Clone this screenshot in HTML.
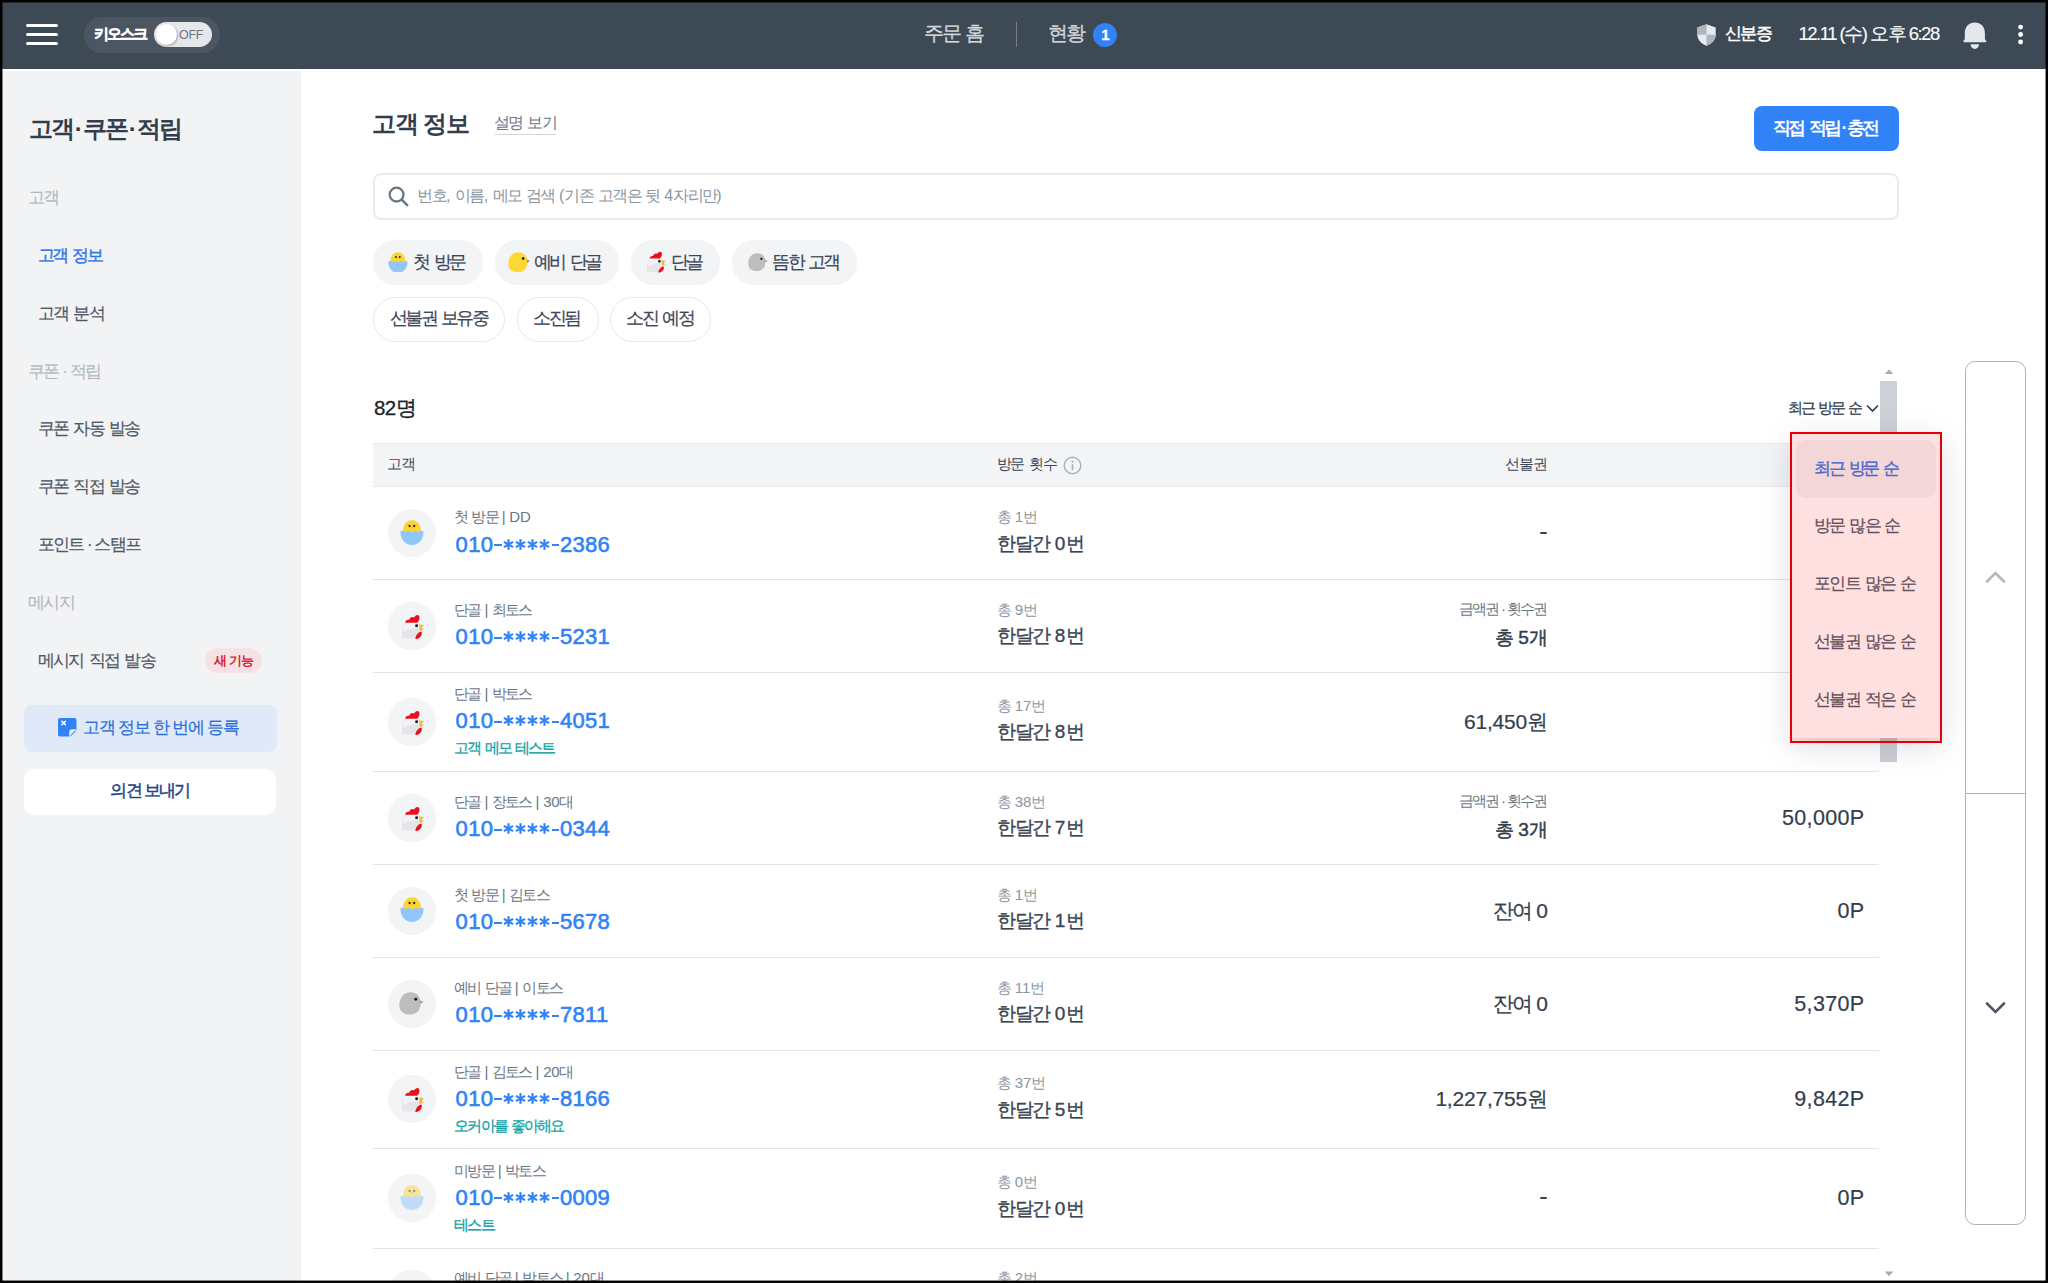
<!DOCTYPE html>
<html lang="ko">
<head>
<meta charset="utf-8">
<title>고객 정보</title>
<style>
*{box-sizing:border-box;margin:0;padding:0}
html,body{width:2048px;height:1283px;overflow:hidden;background:#fff}
body{position:relative;font-family:"Liberation Sans",sans-serif;color:#333d4b}
.a{position:absolute}
.t{position:absolute;white-space:nowrap;line-height:1}
.sb{-webkit-text-stroke:0.25px currentColor}
.sb2{-webkit-text-stroke:0.5px currentColor}
.ast{display:inline-block;position:relative}
</style>
</head>
<body>
<div class="a" style="left:0px;top:0px;width:2048px;height:69px;background:#3d4955;"></div>
<div class="a" style="left:26px;top:23.9px;width:32px;height:3.0px;background:#fff;border-radius:1.5px"></div>
<div class="a" style="left:26px;top:32.9px;width:32px;height:3.0px;background:#fff;border-radius:1.5px"></div>
<div class="a" style="left:26px;top:41.9px;width:32px;height:3.0px;background:#fff;border-radius:1.5px"></div>
<div class="a" style="left:84px;top:17px;width:136px;height:36px;background:#4b5662;border-radius:18px"></div>
<div class="t " style="left:94.4px;top:26.90px;font-size:14.5px;color:#fff;font-weight:700;letter-spacing:-2.1px;-webkit-text-stroke:0.4px #fff;">키오스크</div>
<div class="a" style="left:154px;top:22px;width:58px;height:25px;background:#e5e8eb;border-radius:12.5px"></div>
<div class="a" style="left:156px;top:24px;width:21px;height:21px;border-radius:50%;background:#fff;box-shadow:1px 1px 2px rgba(0,0,0,.28)"></div>
<div class="t " style="left:179px;top:28.50px;font-size:12.5px;color:#6b7684;letter-spacing:-0.3px;">OFF</div>
<div class="t " style="left:924.4px;top:23.32px;font-size:20px;color:#d1d6db;letter-spacing:-2.5px;-webkit-text-stroke:0.3px #d1d6db;">주문<span style="letter-spacing:0.3px"> </span>홈</div>
<div class="a" style="left:1015.5px;top:22px;width:1.2999999999999545px;height:25px;background:#76808c;"></div>
<div class="t " style="left:1048.4px;top:23.32px;font-size:20px;color:#d1d6db;letter-spacing:-2.8px;-webkit-text-stroke:0.3px #d1d6db;">현황</div>
<div class="a" style="left:1093px;top:22.5px;width:24px;height:24px;border-radius:50%;background:#3182f6"></div>
<div class="t " style="left:1093.30px;width:24px;text-align:center;top:27.28px;font-size:15px;color:#fff;font-weight:700;-webkit-text-stroke:0.3px #fff;">1</div>
<svg class="a" style="left:1697px;top:24px" width="19" height="22" viewBox="0 0 19 22">
 <path d="M9.5 0.3 L18.7 3.6 V10.5 C18.7 15.8 14.7 19.8 9.5 21.8 C4.3 19.8 0.3 15.8 0.3 10.5 V3.6 Z" fill="#e8ebee"/>
 <path d="M9.5 0.3 L0.3 3.6 V10.8 H9.5 Z" fill="#aeb5bd"/>
 <path d="M9.5 10.8 H18.7 C18.5 15.8 14.7 19.8 9.5 21.8 Z" fill="#aeb5bd"/>
</svg>
<div class="t " style="left:1724.8px;top:24.99px;font-size:17px;color:#fff;letter-spacing:-1.6px;-webkit-text-stroke:0.45px #fff;">신분증</div>
<div class="t " style="left:1798.5px;top:24.97px;font-size:18.5px;color:#f9fafb;letter-spacing:-1.5px;-webkit-text-stroke:0.15px #f9fafb;">12.11 (수) 오후 6:28</div>
<svg class="a" style="left:1962px;top:22px" width="25" height="28" viewBox="0 0 25 28">
 <path d="M12.85 0.4 C18.8 0.4 22.9 4.5 22.9 11 V17.3 L24 18.5 C24.6 19.2 24.3 20.3 23.3 20.3 H2.4 C1.4 20.3 1.1 19.2 1.7 18.5 L2.8 17.3 V11 C2.8 4.5 6.9 0.4 12.85 0.4 Z" fill="#e5e8eb"/>
 <path d="M8.6 22.3 H17 C17 25 15.2 27 12.8 27 C10.4 27 8.6 25 8.6 22.3 Z" fill="#e5e8eb"/>
</svg>
<svg class="a" style="left:2016px;top:22px" width="9" height="25" viewBox="0 0 9 25"><circle cx="4.6" cy="5.1" r="2.45" fill="#fff"/><circle cx="4.6" cy="12.5" r="2.45" fill="#fff"/><circle cx="4.6" cy="20" r="2.45" fill="#fff"/></svg>
<div class="a" style="left:0px;top:71px;width:301px;height:1212px;background:#f2f3f5;"></div>
<div class="t " style="left:28.6px;top:116.65px;font-size:24px;color:#333d4b;font-weight:700;letter-spacing:-1.9px;">고객<span style="padding:0 1.9px">·</span>쿠폰<span style="padding:0 1.9px">·</span>적립</div>
<div class="t " style="left:28.2px;top:188.79px;font-size:17px;color:#b0b8c1;letter-spacing:-1.7px;-webkit-text-stroke:0.1px #b0b8c1;">고객</div>
<div class="t " style="left:37.5px;top:246.79px;font-size:17px;color:#3276e4;letter-spacing:-2.2px;-webkit-text-stroke:0.4px #3276e4;">고객<span style="letter-spacing:0.5px"> </span>정보</div>
<div class="t " style="left:37.5px;top:304.79px;font-size:17px;color:#4e5968;letter-spacing:-1.7px;-webkit-text-stroke:0.2px #4e5968;">고객<span style="letter-spacing:0.5px"> </span>분석</div>
<div class="t " style="left:28.2px;top:362.59px;font-size:17px;color:#b0b8c1;letter-spacing:-1.7px;-webkit-text-stroke:0.1px #b0b8c1;">쿠폰<span style="padding:0 3.5px">·</span>적립</div>
<div class="t " style="left:37.5px;top:420.09px;font-size:17px;color:#4e5968;letter-spacing:-1.7px;-webkit-text-stroke:0.2px #4e5968;">쿠폰<span style="letter-spacing:0.5px"> </span>자동<span style="letter-spacing:0.5px"> </span>발송</div>
<div class="t " style="left:37.5px;top:477.79px;font-size:17px;color:#4e5968;letter-spacing:-1.7px;-webkit-text-stroke:0.2px #4e5968;">쿠폰<span style="letter-spacing:0.5px"> </span>직접<span style="letter-spacing:0.5px"> </span>발송</div>
<div class="t " style="left:37.5px;top:535.59px;font-size:17px;color:#4e5968;letter-spacing:-1.7px;-webkit-text-stroke:0.2px #4e5968;">포인트<span style="padding:0 3.5px">·</span>스탬프</div>
<div class="t " style="left:28.2px;top:594.19px;font-size:17px;color:#b0b8c1;letter-spacing:-1.7px;-webkit-text-stroke:0.1px #b0b8c1;">메시지</div>
<div class="t " style="left:37.5px;top:651.59px;font-size:17px;color:#4e5968;letter-spacing:-1.7px;-webkit-text-stroke:0.2px #4e5968;">메시지<span style="letter-spacing:0.5px"> </span>직접<span style="letter-spacing:0.5px"> </span>발송</div>
<div class="a" style="left:205.3px;top:648.3px;width:57.0px;height:25.200000000000045px;background:#f6e2e5;border-radius:13px"></div>
<div class="t " style="left:203.80px;width:60px;text-align:center;top:653.96px;font-size:13px;color:#d92434;font-weight:700;letter-spacing:-0.6px;">새 기능</div>
<div class="a" style="left:24px;top:705.2px;width:253px;height:47.09999999999991px;background:#e0e9f7;border-radius:8px"></div>
<svg class="a" style="left:58.3px;top:718.4px" width="18.5" height="18.5" viewBox="0 0 19 19">
 <path d="M2 0 H17 C18.1 0 19 .9 19 2 V11.5 L11.5 19 H2 C.9 19 0 18.1 0 17 V2 C0 .9 .9 0 2 0 Z" fill="#3182f6"/>
 <path d="M12.8 19 V14.8 C12.8 13.7 13.7 12.8 14.8 12.8 H19 Z" fill="#3182f6"/>
 <path d="M11.5 19 L19 11.5 H14.2 C12.7 11.5 11.5 12.7 11.5 14.2 Z" fill="#e0e9f7"/>
 <path d="M4 3.3 L7.6 6.9 M7.6 3.3 L4 6.9" stroke="#fff" stroke-width="1.5" stroke-linecap="round"/>
</svg>
<div class="t " style="left:83.4px;top:719.29px;font-size:17px;color:#2b6fdc;letter-spacing:-1.3px;-webkit-text-stroke:0.2px #2b6fdc;">고객 정보 한 번에 등록</div>
<div class="a" style="left:24px;top:769px;width:252px;height:46px;background:#fff;border-radius:10px"></div>
<div class="t " style="left:50.00px;width:200px;text-align:center;top:781.79px;font-size:17px;color:#1f4487;letter-spacing:-1.7px;-webkit-text-stroke:0.45px #1f4487;">의견 보내기</div>
<div class="t " style="left:372.4px;top:112.00px;font-size:24px;color:#333d4b;font-weight:700;letter-spacing:-1.3px;">고객 정보</div>
<div class="t " style="left:493.5px;top:114.64px;font-size:16px;color:#6b7684;letter-spacing:-1.3px;">설명<span style="letter-spacing:0px"> </span>보기</div>
<div class="a" style="left:494.5px;top:134px;width:61.5px;height:1.3000000000000114px;background:#d1d6db;"></div>
<div class="a" style="left:1753.7px;top:106px;width:145.0px;height:45px;background:#3182f6;border-radius:8px"></div>
<div class="t " style="left:1750.00px;width:150px;text-align:center;top:119.35px;font-size:18px;color:#fff;font-weight:700;letter-spacing:-2.8px;">직접<span style="letter-spacing:1.0px"> </span>적립<span style="padding:0 2.0px">·</span>충전</div>
<div class="a" style="left:373px;top:173px;width:1526px;height:47px;border-radius:8px;border:2px solid #ebebeb;background:#fff"></div>
<svg class="a" style="left:388px;top:186px" width="21" height="21" viewBox="0 0 21 21">
 <circle cx="8.6" cy="8.6" r="6.9" fill="none" stroke="#6b7684" stroke-width="2.3"/>
 <path d="M13.7 13.7 L19.2 19.2" stroke="#6b7684" stroke-width="2.5" stroke-linecap="round"/>
</svg>
<div class="t " style="left:417.2px;top:188.34px;font-size:16px;color:#8b95a1;letter-spacing:-1.6px;">번호<span style="letter-spacing:0.0px">, </span>이름<span style="letter-spacing:0.0px">, </span>메모<span style="letter-spacing:0.0px"> </span>검색<span style="letter-spacing:0.0px"> (</span>기존<span style="letter-spacing:0.0px"> </span>고객은<span style="letter-spacing:0.0px"> </span>뒷<span style="letter-spacing:0.0px"> 4</span>자리만<span style="letter-spacing:0.0px">)</span></div>
<div class="a" style="left:373px;top:240.3px;width:110px;height:44.30000000000001px;background:#f2f4f6;border-radius:22px"></div>
<div class="t " style="left:413.3px;top:252.55px;font-size:18px;color:#3d4756;letter-spacing:-2.6px;-webkit-text-stroke:0.2px #3d4756;">첫<span style="letter-spacing:0px"> </span>방문</div>
<div class="a" style="left:494.5px;top:240.3px;width:124.5px;height:44.30000000000001px;background:#f2f4f6;border-radius:22px"></div>
<div class="t " style="left:534.0999999999999px;top:252.55px;font-size:18px;color:#3d4756;letter-spacing:-2.6px;-webkit-text-stroke:0.2px #3d4756;">예비<span style="letter-spacing:0px"> </span>단골</div>
<div class="a" style="left:631px;top:240.3px;width:89px;height:44.30000000000001px;background:#f2f4f6;border-radius:22px"></div>
<div class="t " style="left:670.8px;top:252.55px;font-size:18px;color:#3d4756;letter-spacing:-2.6px;-webkit-text-stroke:0.2px #3d4756;">단골</div>
<div class="a" style="left:731.7px;top:240.3px;width:125.29999999999995px;height:44.30000000000001px;background:#f2f4f6;border-radius:22px"></div>
<div class="t " style="left:772.1999999999999px;top:252.55px;font-size:18px;color:#3d4756;letter-spacing:-2.6px;-webkit-text-stroke:0.2px #3d4756;">뜸한<span style="letter-spacing:0px"> </span>고객</div>
<svg class="a" style="left:387.7px;top:251.5px;opacity:1.0" width="19.92" height="20.75" viewBox="0 0 24 25">
 <path d="M3.2 12 C2.6 5 6.5 0.2 12 0.2 C17.5 0.2 21.4 5 20.8 12 Z" fill="#fcd535"/>
 <circle cx="9.6" cy="6" r="1.15" fill="#2a2a2a"/><circle cx="14.2" cy="6" r="1.15" fill="#2a2a2a"/>
 <path d="M11 7.4 L13 7.4 L12 8.7 Z" fill="#e8932a"/>
 <path d="M0.4 11.6 L3.2 10.4 L5.6 12.2 L8.6 10.4 L12 12.4 L15.4 10.4 L18.4 12.2 L20.8 10.4 L23.6 11.6 C23.6 19.6 18.6 25 12 25 C5.4 25 0.4 19.6 0.4 11.6 Z" fill="#92c5fa"/>
</svg>
<svg class="a" style="left:508.2px;top:251.8px" width="22.50" height="20.70" viewBox="0 0 25 23">
 <path d="M11.5 0.3 C17.5 0.3 21.3 4.2 21.6 10.3 C21.9 17.2 18.6 22.6 11 22.6 C4 22.6 0.3 18.6 0.3 13 C0.3 5.8 5 0.3 11.5 0.3 Z" fill="#fcd836"/>
 <circle cx="16.8" cy="7.3" r="1.45" fill="#111"/>
 <path d="M20.8 8.1 L24.6 10.1 L20.8 12.1 Z" fill="#e8872a"/>
</svg>
<svg class="a" style="left:646px;top:251px" width="20.64" height="21.50" viewBox="0 0 24 25">
 <path d="M1.6 24.6 C0.2 19 1.2 12.5 4.6 8.4 L15.2 8.4 C17.2 10.8 17.9 14.2 17.6 18 L16.8 24.6 Z" fill="#e4e5ea"/>
 <path d="M4.6 8.4 L15.2 8.4 C16.6 10.2 17.4 12.2 17.6 14.2 C13 13.4 7.8 14.8 2.8 18.2 C2.3 14.2 2.8 11.2 4.6 8.4 Z" fill="#f3f3f6"/>
 <path d="M4.2 8.8 C4.4 6.4 6.2 5.3 8.2 5.8 C8.8 3.4 11.1 2.3 13.1 3.4 C14.1 1.1 16.6 0.2 17.9 1.5 C19.2 3.6 18.4 7.1 16.1 8.8 Z" fill="#e8121c"/>
 <circle cx="15.6" cy="11.8" r="1.45" fill="#111"/>
 <path d="M18.4 10.2 L22.9 11.6 L20.6 13.6 L22.4 15.8 L18.4 16.9 Z" fill="#f3b33c"/>
 <path d="M14.2 24.7 C15.2 20.6 17.8 17.8 20.6 17.6 C21.6 20.6 19.6 24.1 15.8 24.9 Z" fill="#e8121c"/>
</svg>
<svg class="a" style="left:748px;top:252.5px" width="20.00" height="18.40" viewBox="0 0 25 23">
 <path d="M11.5 0.3 C17.5 0.3 21.3 4.2 21.6 10.3 C21.9 17.2 18.6 22.6 11 22.6 C4 22.6 0.3 18.6 0.3 13 C0.3 5.8 5 0.3 11.5 0.3 Z" fill="#bdbdbd"/>
 <circle cx="16.8" cy="7.3" r="1.45" fill="#111"/>
 <path d="M20.8 8.1 L24.6 10.1 L20.8 12.1 Z" fill="#a6a6a6"/>
</svg>
<div class="a" style="left:373px;top:297px;width:132.0px;height:45px;border-radius:22.5px;border:1.5px solid #e9e9ea;background:#fff"></div>
<div class="t " style="left:389.8px;top:309.05px;font-size:18px;color:#3d4756;letter-spacing:-2.6px;-webkit-text-stroke:0.2px #3d4756;">선불권<span style="letter-spacing:0px"> </span>보유중</div>
<div class="a" style="left:516.9px;top:297px;width:81.7px;height:45px;border-radius:22.5px;border:1.5px solid #e9e9ea;background:#fff"></div>
<div class="t " style="left:533.3px;top:309.05px;font-size:18px;color:#3d4756;letter-spacing:-2.6px;-webkit-text-stroke:0.2px #3d4756;">소진됨</div>
<div class="a" style="left:610px;top:297px;width:100.6px;height:45px;border-radius:22.5px;border:1.5px solid #e9e9ea;background:#fff"></div>
<div class="t " style="left:626.4px;top:309.05px;font-size:18px;color:#3d4756;letter-spacing:-2.6px;-webkit-text-stroke:0.2px #3d4756;">소진<span style="letter-spacing:0px"> </span>예정</div>
<div class="t " style="left:374.0px;top:397.60px;font-size:20.5px;color:#191f28;letter-spacing:-0.6px;-webkit-text-stroke:0.3px #191f28;">82명</div>
<div class="t " style="left:1787.6px;top:400.38px;font-size:15px;color:#333d4b;letter-spacing:-1.9px;-webkit-text-stroke:0.25px #333d4b;">최근<span style="letter-spacing:0px"> </span>방문<span style="letter-spacing:0px"> </span>순</div>
<svg class="a" style="left:1866px;top:404px" width="13" height="9" viewBox="0 0 13 9"><path d="M1 1.5 L6.5 7 L12 1.5" fill="none" stroke="#333d4b" stroke-width="1.7"/></svg>
<div class="a" style="left:373px;top:443px;width:1506px;height:44px;background:#f2f4f6;border-top:1px solid #e5e8eb;border-bottom:1px solid #e5e8eb"></div>
<div class="t " style="left:387.4px;top:456.28px;font-size:15px;color:#3d4756;letter-spacing:-1.1px;">고객</div>
<div class="t " style="left:996.8px;top:456.28px;font-size:15px;color:#3d4756;letter-spacing:-1.3px;">방문<span style="letter-spacing:0.5px"> </span>횟수</div>
<svg class="a" style="left:1062.6px;top:455.8px" width="19" height="19" viewBox="0 0 19 19"><circle cx="9.5" cy="9.5" r="8.3" fill="none" stroke="#a9b0b8" stroke-width="1.4"/><circle cx="9.5" cy="5.6" r="1.1" fill="#a9b0b8"/><path d="M9.5 8.3 V14" stroke="#a9b0b8" stroke-width="1.6"/></svg>
<div class="t " style="right:501.10px;text-align:right;top:456.28px;font-size:15px;color:#3d4756;letter-spacing:-1.1px;">선불권</div>
<div class="t " style="right:185.10px;text-align:right;top:456.28px;font-size:15px;color:#3d4756;letter-spacing:-1.1px;">포인트</div>
<div class="a" style="left:388px;top:509.0px;width:48px;height:48px;border-radius:50%;background:#f2f4f6"></div>
<svg class="a" style="left:400px;top:519.5px;opacity:1.0" width="24.00" height="25.00" viewBox="0 0 24 25">
 <path d="M3.2 12 C2.6 5 6.5 0.2 12 0.2 C17.5 0.2 21.4 5 20.8 12 Z" fill="#fcd535"/>
 <circle cx="9.6" cy="6" r="1.15" fill="#2a2a2a"/><circle cx="14.2" cy="6" r="1.15" fill="#2a2a2a"/>
 <path d="M11 7.4 L13 7.4 L12 8.7 Z" fill="#e8932a"/>
 <path d="M0.4 11.6 L3.2 10.4 L5.6 12.2 L8.6 10.4 L12 12.4 L15.4 10.4 L18.4 12.2 L20.8 10.4 L23.6 11.6 C23.6 19.6 18.6 25 12 25 C5.4 25 0.4 19.6 0.4 11.6 Z" fill="#92c5fa"/>
</svg>
<div class="t " style="left:454.4px;top:509.38px;font-size:15px;color:#6b7684;letter-spacing:-1.9px;">첫<span style="letter-spacing:-0.2px"> </span>방문<span style="letter-spacing:-0.2px"> | DD</span></div>
<div class="t" style="left:455.6px;top:533.66px;font-size:22px;color:#3182f6;font-weight:400;-webkit-text-stroke:0.6px #3182f6;letter-spacing:0.3px">010<span class="ast" style="width:9px;height:10px"><span style="position:absolute;left:0.8px;top:2.6px;width:7.6px;height:2.1px;background:#3182f6"></span></span><span class="ast" style="width:12.2px;text-align:center"><svg width="11" height="11" viewBox="0 0 11 11" style="vertical-align:2px"><g stroke="#3182f6" stroke-width="2.2"><path d="M5.5 0.2 V10.8"/><path d="M0.9 2.85 L10.1 8.15"/><path d="M0.9 8.15 L10.1 2.85"/></g></svg></span><span class="ast" style="width:12.2px;text-align:center"><svg width="11" height="11" viewBox="0 0 11 11" style="vertical-align:2px"><g stroke="#3182f6" stroke-width="2.2"><path d="M5.5 0.2 V10.8"/><path d="M0.9 2.85 L10.1 8.15"/><path d="M0.9 8.15 L10.1 2.85"/></g></svg></span><span class="ast" style="width:12.2px;text-align:center"><svg width="11" height="11" viewBox="0 0 11 11" style="vertical-align:2px"><g stroke="#3182f6" stroke-width="2.2"><path d="M5.5 0.2 V10.8"/><path d="M0.9 2.85 L10.1 8.15"/><path d="M0.9 8.15 L10.1 2.85"/></g></svg></span><span class="ast" style="width:12.2px;text-align:center"><svg width="11" height="11" viewBox="0 0 11 11" style="vertical-align:2px"><g stroke="#3182f6" stroke-width="2.2"><path d="M5.5 0.2 V10.8"/><path d="M0.9 2.85 L10.1 8.15"/><path d="M0.9 8.15 L10.1 2.85"/></g></svg></span><span class="ast" style="width:9px;height:10px"><span style="position:absolute;left:0.8px;top:2.6px;width:7.6px;height:2.1px;background:#3182f6"></span></span>2386</div>
<div class="t " style="left:996.8px;top:509.48px;font-size:15px;color:#8b95a1;letter-spacing:-1.2px;">총<span style="letter-spacing:0px"> 1</span>번</div>
<div class="t " style="left:997.4px;top:533.81px;font-size:19px;color:#3a4452;letter-spacing:-1.7px;-webkit-text-stroke:0.35px #3a4452;">한달간<span style="letter-spacing:0.2px"> 0</span>번</div>
<div class="a" style="left:1540.2px;top:531.7px;width:7.099999999999909px;height:1.8999999999999773px;background:#3a4350;border-radius:1px"></div>
<div class="t " style="right:183.70px;text-align:right;top:523.11px;font-size:21.5px;color:#333d4b;letter-spacing:0.3px;-webkit-text-stroke:0.2px #333d4b;">0P</div>
<div class="a" style="left:373px;top:579px;width:1506px;height:1px;background:#e2e3e5;"></div>
<div class="a" style="left:388px;top:601.5px;width:48px;height:48px;border-radius:50%;background:#f2f4f6"></div>
<svg class="a" style="left:400.5px;top:613.7px" width="24.00" height="25.00" viewBox="0 0 24 25">
 <path d="M1.6 24.6 C0.2 19 1.2 12.5 4.6 8.4 L15.2 8.4 C17.2 10.8 17.9 14.2 17.6 18 L16.8 24.6 Z" fill="#e4e5ea"/>
 <path d="M4.6 8.4 L15.2 8.4 C16.6 10.2 17.4 12.2 17.6 14.2 C13 13.4 7.8 14.8 2.8 18.2 C2.3 14.2 2.8 11.2 4.6 8.4 Z" fill="#f3f3f6"/>
 <path d="M4.2 8.8 C4.4 6.4 6.2 5.3 8.2 5.8 C8.8 3.4 11.1 2.3 13.1 3.4 C14.1 1.1 16.6 0.2 17.9 1.5 C19.2 3.6 18.4 7.1 16.1 8.8 Z" fill="#e8121c"/>
 <circle cx="15.6" cy="11.8" r="1.45" fill="#111"/>
 <path d="M18.4 10.2 L22.9 11.6 L20.6 13.6 L22.4 15.8 L18.4 16.9 Z" fill="#f3b33c"/>
 <path d="M14.2 24.7 C15.2 20.6 17.8 17.8 20.6 17.6 C21.6 20.6 19.6 24.1 15.8 24.9 Z" fill="#e8121c"/>
</svg>
<div class="t " style="left:454.4px;top:601.88px;font-size:15px;color:#6b7684;letter-spacing:-1.9px;">단골<span style="letter-spacing:-0.2px"> | </span>최토스</div>
<div class="t" style="left:455.6px;top:626.16px;font-size:22px;color:#3182f6;font-weight:400;-webkit-text-stroke:0.6px #3182f6;letter-spacing:0.3px">010<span class="ast" style="width:9px;height:10px"><span style="position:absolute;left:0.8px;top:2.6px;width:7.6px;height:2.1px;background:#3182f6"></span></span><span class="ast" style="width:12.2px;text-align:center"><svg width="11" height="11" viewBox="0 0 11 11" style="vertical-align:2px"><g stroke="#3182f6" stroke-width="2.2"><path d="M5.5 0.2 V10.8"/><path d="M0.9 2.85 L10.1 8.15"/><path d="M0.9 8.15 L10.1 2.85"/></g></svg></span><span class="ast" style="width:12.2px;text-align:center"><svg width="11" height="11" viewBox="0 0 11 11" style="vertical-align:2px"><g stroke="#3182f6" stroke-width="2.2"><path d="M5.5 0.2 V10.8"/><path d="M0.9 2.85 L10.1 8.15"/><path d="M0.9 8.15 L10.1 2.85"/></g></svg></span><span class="ast" style="width:12.2px;text-align:center"><svg width="11" height="11" viewBox="0 0 11 11" style="vertical-align:2px"><g stroke="#3182f6" stroke-width="2.2"><path d="M5.5 0.2 V10.8"/><path d="M0.9 2.85 L10.1 8.15"/><path d="M0.9 8.15 L10.1 2.85"/></g></svg></span><span class="ast" style="width:12.2px;text-align:center"><svg width="11" height="11" viewBox="0 0 11 11" style="vertical-align:2px"><g stroke="#3182f6" stroke-width="2.2"><path d="M5.5 0.2 V10.8"/><path d="M0.9 2.85 L10.1 8.15"/><path d="M0.9 8.15 L10.1 2.85"/></g></svg></span><span class="ast" style="width:9px;height:10px"><span style="position:absolute;left:0.8px;top:2.6px;width:7.6px;height:2.1px;background:#3182f6"></span></span>5231</div>
<div class="t " style="left:996.8px;top:601.98px;font-size:15px;color:#8b95a1;letter-spacing:-1.2px;">총<span style="letter-spacing:0px"> 9</span>번</div>
<div class="t " style="left:997.4px;top:626.31px;font-size:19px;color:#3a4452;letter-spacing:-1.7px;-webkit-text-stroke:0.35px #3a4452;">한달간<span style="letter-spacing:0.2px"> 8</span>번</div>
<div class="t " style="right:501.90px;text-align:right;top:601.18px;font-size:15px;color:#6b7684;letter-spacing:-1.9px;">금액권<span style="padding:0 2.6px">·</span>횟수권</div>
<div class="t " style="right:501.60px;text-align:right;top:627.81px;font-size:19px;color:#333d4b;letter-spacing:-1.6px;-webkit-text-stroke:0.45px #333d4b;">총<span style="letter-spacing:0.3px"> 5</span>개</div>
<div class="t " style="right:183.70px;text-align:right;top:615.61px;font-size:21.5px;color:#333d4b;letter-spacing:0.3px;-webkit-text-stroke:0.2px #333d4b;">1,250P</div>
<div class="a" style="left:373px;top:672px;width:1506px;height:1px;background:#e2e3e5;"></div>
<div class="a" style="left:388px;top:697.5px;width:48px;height:48px;border-radius:50%;background:#f2f4f6"></div>
<svg class="a" style="left:400.5px;top:709.7px" width="24.00" height="25.00" viewBox="0 0 24 25">
 <path d="M1.6 24.6 C0.2 19 1.2 12.5 4.6 8.4 L15.2 8.4 C17.2 10.8 17.9 14.2 17.6 18 L16.8 24.6 Z" fill="#e4e5ea"/>
 <path d="M4.6 8.4 L15.2 8.4 C16.6 10.2 17.4 12.2 17.6 14.2 C13 13.4 7.8 14.8 2.8 18.2 C2.3 14.2 2.8 11.2 4.6 8.4 Z" fill="#f3f3f6"/>
 <path d="M4.2 8.8 C4.4 6.4 6.2 5.3 8.2 5.8 C8.8 3.4 11.1 2.3 13.1 3.4 C14.1 1.1 16.6 0.2 17.9 1.5 C19.2 3.6 18.4 7.1 16.1 8.8 Z" fill="#e8121c"/>
 <circle cx="15.6" cy="11.8" r="1.45" fill="#111"/>
 <path d="M18.4 10.2 L22.9 11.6 L20.6 13.6 L22.4 15.8 L18.4 16.9 Z" fill="#f3b33c"/>
 <path d="M14.2 24.7 C15.2 20.6 17.8 17.8 20.6 17.6 C21.6 20.6 19.6 24.1 15.8 24.9 Z" fill="#e8121c"/>
</svg>
<div class="t " style="left:454.4px;top:686.38px;font-size:15px;color:#6b7684;letter-spacing:-1.9px;">단골<span style="letter-spacing:-0.2px"> | </span>박토스</div>
<div class="t" style="left:455.6px;top:710.06px;font-size:22px;color:#3182f6;font-weight:400;-webkit-text-stroke:0.6px #3182f6;letter-spacing:0.3px">010<span class="ast" style="width:9px;height:10px"><span style="position:absolute;left:0.8px;top:2.6px;width:7.6px;height:2.1px;background:#3182f6"></span></span><span class="ast" style="width:12.2px;text-align:center"><svg width="11" height="11" viewBox="0 0 11 11" style="vertical-align:2px"><g stroke="#3182f6" stroke-width="2.2"><path d="M5.5 0.2 V10.8"/><path d="M0.9 2.85 L10.1 8.15"/><path d="M0.9 8.15 L10.1 2.85"/></g></svg></span><span class="ast" style="width:12.2px;text-align:center"><svg width="11" height="11" viewBox="0 0 11 11" style="vertical-align:2px"><g stroke="#3182f6" stroke-width="2.2"><path d="M5.5 0.2 V10.8"/><path d="M0.9 2.85 L10.1 8.15"/><path d="M0.9 8.15 L10.1 2.85"/></g></svg></span><span class="ast" style="width:12.2px;text-align:center"><svg width="11" height="11" viewBox="0 0 11 11" style="vertical-align:2px"><g stroke="#3182f6" stroke-width="2.2"><path d="M5.5 0.2 V10.8"/><path d="M0.9 2.85 L10.1 8.15"/><path d="M0.9 8.15 L10.1 2.85"/></g></svg></span><span class="ast" style="width:12.2px;text-align:center"><svg width="11" height="11" viewBox="0 0 11 11" style="vertical-align:2px"><g stroke="#3182f6" stroke-width="2.2"><path d="M5.5 0.2 V10.8"/><path d="M0.9 2.85 L10.1 8.15"/><path d="M0.9 8.15 L10.1 2.85"/></g></svg></span><span class="ast" style="width:9px;height:10px"><span style="position:absolute;left:0.8px;top:2.6px;width:7.6px;height:2.1px;background:#3182f6"></span></span>4051</div>
<div class="t " style="left:454.4px;top:740.28px;font-size:15px;color:#15a3a6;letter-spacing:-1.9px;-webkit-text-stroke:0.3px #15a3a6;">고객<span style="letter-spacing:0px"> </span>메모<span style="letter-spacing:0px"> </span>테스트</div>
<div class="t " style="left:996.8px;top:697.98px;font-size:15px;color:#8b95a1;letter-spacing:-1.2px;">총<span style="letter-spacing:0px"> 17</span>번</div>
<div class="t " style="left:997.4px;top:722.31px;font-size:19px;color:#3a4452;letter-spacing:-1.7px;-webkit-text-stroke:0.35px #3a4452;">한달간<span style="letter-spacing:0.2px"> 8</span>번</div>
<div class="t " style="right:502.20px;text-align:right;top:710.85px;font-size:21px;color:#333d4b;letter-spacing:-2.2px;-webkit-text-stroke:0.2px #333d4b;"><span style="letter-spacing:-0.2px">61,450</span>원</div>
<div class="t " style="right:183.70px;text-align:right;top:711.61px;font-size:21.5px;color:#333d4b;letter-spacing:0.3px;-webkit-text-stroke:0.2px #333d4b;">3,100P</div>
<div class="a" style="left:373px;top:771px;width:1506px;height:1px;background:#e2e3e5;"></div>
<div class="a" style="left:388px;top:793.5px;width:48px;height:48px;border-radius:50%;background:#f2f4f6"></div>
<svg class="a" style="left:400.5px;top:805.7px" width="24.00" height="25.00" viewBox="0 0 24 25">
 <path d="M1.6 24.6 C0.2 19 1.2 12.5 4.6 8.4 L15.2 8.4 C17.2 10.8 17.9 14.2 17.6 18 L16.8 24.6 Z" fill="#e4e5ea"/>
 <path d="M4.6 8.4 L15.2 8.4 C16.6 10.2 17.4 12.2 17.6 14.2 C13 13.4 7.8 14.8 2.8 18.2 C2.3 14.2 2.8 11.2 4.6 8.4 Z" fill="#f3f3f6"/>
 <path d="M4.2 8.8 C4.4 6.4 6.2 5.3 8.2 5.8 C8.8 3.4 11.1 2.3 13.1 3.4 C14.1 1.1 16.6 0.2 17.9 1.5 C19.2 3.6 18.4 7.1 16.1 8.8 Z" fill="#e8121c"/>
 <circle cx="15.6" cy="11.8" r="1.45" fill="#111"/>
 <path d="M18.4 10.2 L22.9 11.6 L20.6 13.6 L22.4 15.8 L18.4 16.9 Z" fill="#f3b33c"/>
 <path d="M14.2 24.7 C15.2 20.6 17.8 17.8 20.6 17.6 C21.6 20.6 19.6 24.1 15.8 24.9 Z" fill="#e8121c"/>
</svg>
<div class="t " style="left:454.4px;top:793.88px;font-size:15px;color:#6b7684;letter-spacing:-1.9px;">단골<span style="letter-spacing:-0.2px"> | </span>장토스<span style="letter-spacing:-0.2px"> | 30</span>대</div>
<div class="t" style="left:455.6px;top:818.16px;font-size:22px;color:#3182f6;font-weight:400;-webkit-text-stroke:0.6px #3182f6;letter-spacing:0.3px">010<span class="ast" style="width:9px;height:10px"><span style="position:absolute;left:0.8px;top:2.6px;width:7.6px;height:2.1px;background:#3182f6"></span></span><span class="ast" style="width:12.2px;text-align:center"><svg width="11" height="11" viewBox="0 0 11 11" style="vertical-align:2px"><g stroke="#3182f6" stroke-width="2.2"><path d="M5.5 0.2 V10.8"/><path d="M0.9 2.85 L10.1 8.15"/><path d="M0.9 8.15 L10.1 2.85"/></g></svg></span><span class="ast" style="width:12.2px;text-align:center"><svg width="11" height="11" viewBox="0 0 11 11" style="vertical-align:2px"><g stroke="#3182f6" stroke-width="2.2"><path d="M5.5 0.2 V10.8"/><path d="M0.9 2.85 L10.1 8.15"/><path d="M0.9 8.15 L10.1 2.85"/></g></svg></span><span class="ast" style="width:12.2px;text-align:center"><svg width="11" height="11" viewBox="0 0 11 11" style="vertical-align:2px"><g stroke="#3182f6" stroke-width="2.2"><path d="M5.5 0.2 V10.8"/><path d="M0.9 2.85 L10.1 8.15"/><path d="M0.9 8.15 L10.1 2.85"/></g></svg></span><span class="ast" style="width:12.2px;text-align:center"><svg width="11" height="11" viewBox="0 0 11 11" style="vertical-align:2px"><g stroke="#3182f6" stroke-width="2.2"><path d="M5.5 0.2 V10.8"/><path d="M0.9 2.85 L10.1 8.15"/><path d="M0.9 8.15 L10.1 2.85"/></g></svg></span><span class="ast" style="width:9px;height:10px"><span style="position:absolute;left:0.8px;top:2.6px;width:7.6px;height:2.1px;background:#3182f6"></span></span>0344</div>
<div class="t " style="left:996.8px;top:793.98px;font-size:15px;color:#8b95a1;letter-spacing:-1.2px;">총<span style="letter-spacing:0px"> 38</span>번</div>
<div class="t " style="left:997.4px;top:818.31px;font-size:19px;color:#3a4452;letter-spacing:-1.7px;-webkit-text-stroke:0.35px #3a4452;">한달간<span style="letter-spacing:0.2px"> 7</span>번</div>
<div class="t " style="right:501.90px;text-align:right;top:793.18px;font-size:15px;color:#6b7684;letter-spacing:-1.9px;">금액권<span style="padding:0 2.6px">·</span>횟수권</div>
<div class="t " style="right:501.60px;text-align:right;top:819.81px;font-size:19px;color:#333d4b;letter-spacing:-1.6px;-webkit-text-stroke:0.45px #333d4b;">총<span style="letter-spacing:0.3px"> 3</span>개</div>
<div class="t " style="right:183.70px;text-align:right;top:807.61px;font-size:21.5px;color:#333d4b;letter-spacing:0.3px;-webkit-text-stroke:0.2px #333d4b;">50,000P</div>
<div class="a" style="left:373px;top:864px;width:1506px;height:1px;background:#e2e3e5;"></div>
<div class="a" style="left:388px;top:886.5px;width:48px;height:48px;border-radius:50%;background:#f2f4f6"></div>
<svg class="a" style="left:400px;top:897.0px;opacity:1.0" width="24.00" height="25.00" viewBox="0 0 24 25">
 <path d="M3.2 12 C2.6 5 6.5 0.2 12 0.2 C17.5 0.2 21.4 5 20.8 12 Z" fill="#fcd535"/>
 <circle cx="9.6" cy="6" r="1.15" fill="#2a2a2a"/><circle cx="14.2" cy="6" r="1.15" fill="#2a2a2a"/>
 <path d="M11 7.4 L13 7.4 L12 8.7 Z" fill="#e8932a"/>
 <path d="M0.4 11.6 L3.2 10.4 L5.6 12.2 L8.6 10.4 L12 12.4 L15.4 10.4 L18.4 12.2 L20.8 10.4 L23.6 11.6 C23.6 19.6 18.6 25 12 25 C5.4 25 0.4 19.6 0.4 11.6 Z" fill="#92c5fa"/>
</svg>
<div class="t " style="left:454.4px;top:886.88px;font-size:15px;color:#6b7684;letter-spacing:-1.9px;">첫<span style="letter-spacing:-0.2px"> </span>방문<span style="letter-spacing:-0.2px"> | </span>김토스</div>
<div class="t" style="left:455.6px;top:911.16px;font-size:22px;color:#3182f6;font-weight:400;-webkit-text-stroke:0.6px #3182f6;letter-spacing:0.3px">010<span class="ast" style="width:9px;height:10px"><span style="position:absolute;left:0.8px;top:2.6px;width:7.6px;height:2.1px;background:#3182f6"></span></span><span class="ast" style="width:12.2px;text-align:center"><svg width="11" height="11" viewBox="0 0 11 11" style="vertical-align:2px"><g stroke="#3182f6" stroke-width="2.2"><path d="M5.5 0.2 V10.8"/><path d="M0.9 2.85 L10.1 8.15"/><path d="M0.9 8.15 L10.1 2.85"/></g></svg></span><span class="ast" style="width:12.2px;text-align:center"><svg width="11" height="11" viewBox="0 0 11 11" style="vertical-align:2px"><g stroke="#3182f6" stroke-width="2.2"><path d="M5.5 0.2 V10.8"/><path d="M0.9 2.85 L10.1 8.15"/><path d="M0.9 8.15 L10.1 2.85"/></g></svg></span><span class="ast" style="width:12.2px;text-align:center"><svg width="11" height="11" viewBox="0 0 11 11" style="vertical-align:2px"><g stroke="#3182f6" stroke-width="2.2"><path d="M5.5 0.2 V10.8"/><path d="M0.9 2.85 L10.1 8.15"/><path d="M0.9 8.15 L10.1 2.85"/></g></svg></span><span class="ast" style="width:12.2px;text-align:center"><svg width="11" height="11" viewBox="0 0 11 11" style="vertical-align:2px"><g stroke="#3182f6" stroke-width="2.2"><path d="M5.5 0.2 V10.8"/><path d="M0.9 2.85 L10.1 8.15"/><path d="M0.9 8.15 L10.1 2.85"/></g></svg></span><span class="ast" style="width:9px;height:10px"><span style="position:absolute;left:0.8px;top:2.6px;width:7.6px;height:2.1px;background:#3182f6"></span></span>5678</div>
<div class="t " style="left:996.8px;top:886.98px;font-size:15px;color:#8b95a1;letter-spacing:-1.2px;">총<span style="letter-spacing:0px"> 1</span>번</div>
<div class="t " style="left:997.4px;top:911.31px;font-size:19px;color:#3a4452;letter-spacing:-1.7px;-webkit-text-stroke:0.35px #3a4452;">한달간<span style="letter-spacing:0.2px"> 1</span>번</div>
<div class="t " style="right:500.20px;text-align:right;top:899.85px;font-size:21px;color:#333d4b;letter-spacing:-2.2px;-webkit-text-stroke:0.2px #333d4b;">잔여<span style="letter-spacing:-0.2px"> 0</span></div>
<div class="t " style="right:183.70px;text-align:right;top:900.61px;font-size:21.5px;color:#333d4b;letter-spacing:0.3px;-webkit-text-stroke:0.2px #333d4b;">0P</div>
<div class="a" style="left:373px;top:957px;width:1506px;height:1px;background:#e2e3e5;"></div>
<div class="a" style="left:388px;top:979.5px;width:48px;height:48px;border-radius:50%;background:#f2f4f6"></div>
<svg class="a" style="left:399px;top:991.9px" width="25.00" height="23.00" viewBox="0 0 25 23">
 <path d="M11.5 0.3 C17.5 0.3 21.3 4.2 21.6 10.3 C21.9 17.2 18.6 22.6 11 22.6 C4 22.6 0.3 18.6 0.3 13 C0.3 5.8 5 0.3 11.5 0.3 Z" fill="#bdbdbd"/>
 <circle cx="16.8" cy="7.3" r="1.45" fill="#111"/>
 <path d="M20.8 8.1 L24.6 10.1 L20.8 12.1 Z" fill="#a6a6a6"/>
</svg>
<div class="t " style="left:454.4px;top:979.88px;font-size:15px;color:#6b7684;letter-spacing:-1.9px;">예비<span style="letter-spacing:-0.2px"> </span>단골<span style="letter-spacing:-0.2px"> | </span>이토스</div>
<div class="t" style="left:455.6px;top:1004.16px;font-size:22px;color:#3182f6;font-weight:400;-webkit-text-stroke:0.6px #3182f6;letter-spacing:0.3px">010<span class="ast" style="width:9px;height:10px"><span style="position:absolute;left:0.8px;top:2.6px;width:7.6px;height:2.1px;background:#3182f6"></span></span><span class="ast" style="width:12.2px;text-align:center"><svg width="11" height="11" viewBox="0 0 11 11" style="vertical-align:2px"><g stroke="#3182f6" stroke-width="2.2"><path d="M5.5 0.2 V10.8"/><path d="M0.9 2.85 L10.1 8.15"/><path d="M0.9 8.15 L10.1 2.85"/></g></svg></span><span class="ast" style="width:12.2px;text-align:center"><svg width="11" height="11" viewBox="0 0 11 11" style="vertical-align:2px"><g stroke="#3182f6" stroke-width="2.2"><path d="M5.5 0.2 V10.8"/><path d="M0.9 2.85 L10.1 8.15"/><path d="M0.9 8.15 L10.1 2.85"/></g></svg></span><span class="ast" style="width:12.2px;text-align:center"><svg width="11" height="11" viewBox="0 0 11 11" style="vertical-align:2px"><g stroke="#3182f6" stroke-width="2.2"><path d="M5.5 0.2 V10.8"/><path d="M0.9 2.85 L10.1 8.15"/><path d="M0.9 8.15 L10.1 2.85"/></g></svg></span><span class="ast" style="width:12.2px;text-align:center"><svg width="11" height="11" viewBox="0 0 11 11" style="vertical-align:2px"><g stroke="#3182f6" stroke-width="2.2"><path d="M5.5 0.2 V10.8"/><path d="M0.9 2.85 L10.1 8.15"/><path d="M0.9 8.15 L10.1 2.85"/></g></svg></span><span class="ast" style="width:9px;height:10px"><span style="position:absolute;left:0.8px;top:2.6px;width:7.6px;height:2.1px;background:#3182f6"></span></span>7811</div>
<div class="t " style="left:996.8px;top:979.98px;font-size:15px;color:#8b95a1;letter-spacing:-1.2px;">총<span style="letter-spacing:0px"> 11</span>번</div>
<div class="t " style="left:997.4px;top:1004.31px;font-size:19px;color:#3a4452;letter-spacing:-1.7px;-webkit-text-stroke:0.35px #3a4452;">한달간<span style="letter-spacing:0.2px"> 0</span>번</div>
<div class="t " style="right:500.20px;text-align:right;top:992.85px;font-size:21px;color:#333d4b;letter-spacing:-2.2px;-webkit-text-stroke:0.2px #333d4b;">잔여<span style="letter-spacing:-0.2px"> 0</span></div>
<div class="t " style="right:183.70px;text-align:right;top:993.61px;font-size:21.5px;color:#333d4b;letter-spacing:0.3px;-webkit-text-stroke:0.2px #333d4b;">5,370P</div>
<div class="a" style="left:373px;top:1050px;width:1506px;height:1px;background:#e2e3e5;"></div>
<div class="a" style="left:388px;top:1075.0px;width:48px;height:48px;border-radius:50%;background:#f2f4f6"></div>
<svg class="a" style="left:400.5px;top:1087.2px" width="24.00" height="25.00" viewBox="0 0 24 25">
 <path d="M1.6 24.6 C0.2 19 1.2 12.5 4.6 8.4 L15.2 8.4 C17.2 10.8 17.9 14.2 17.6 18 L16.8 24.6 Z" fill="#e4e5ea"/>
 <path d="M4.6 8.4 L15.2 8.4 C16.6 10.2 17.4 12.2 17.6 14.2 C13 13.4 7.8 14.8 2.8 18.2 C2.3 14.2 2.8 11.2 4.6 8.4 Z" fill="#f3f3f6"/>
 <path d="M4.2 8.8 C4.4 6.4 6.2 5.3 8.2 5.8 C8.8 3.4 11.1 2.3 13.1 3.4 C14.1 1.1 16.6 0.2 17.9 1.5 C19.2 3.6 18.4 7.1 16.1 8.8 Z" fill="#e8121c"/>
 <circle cx="15.6" cy="11.8" r="1.45" fill="#111"/>
 <path d="M18.4 10.2 L22.9 11.6 L20.6 13.6 L22.4 15.8 L18.4 16.9 Z" fill="#f3b33c"/>
 <path d="M14.2 24.7 C15.2 20.6 17.8 17.8 20.6 17.6 C21.6 20.6 19.6 24.1 15.8 24.9 Z" fill="#e8121c"/>
</svg>
<div class="t " style="left:454.4px;top:1063.88px;font-size:15px;color:#6b7684;letter-spacing:-1.9px;">단골<span style="letter-spacing:-0.2px"> | </span>김토스<span style="letter-spacing:-0.2px"> | 20</span>대</div>
<div class="t" style="left:455.6px;top:1087.56px;font-size:22px;color:#3182f6;font-weight:400;-webkit-text-stroke:0.6px #3182f6;letter-spacing:0.3px">010<span class="ast" style="width:9px;height:10px"><span style="position:absolute;left:0.8px;top:2.6px;width:7.6px;height:2.1px;background:#3182f6"></span></span><span class="ast" style="width:12.2px;text-align:center"><svg width="11" height="11" viewBox="0 0 11 11" style="vertical-align:2px"><g stroke="#3182f6" stroke-width="2.2"><path d="M5.5 0.2 V10.8"/><path d="M0.9 2.85 L10.1 8.15"/><path d="M0.9 8.15 L10.1 2.85"/></g></svg></span><span class="ast" style="width:12.2px;text-align:center"><svg width="11" height="11" viewBox="0 0 11 11" style="vertical-align:2px"><g stroke="#3182f6" stroke-width="2.2"><path d="M5.5 0.2 V10.8"/><path d="M0.9 2.85 L10.1 8.15"/><path d="M0.9 8.15 L10.1 2.85"/></g></svg></span><span class="ast" style="width:12.2px;text-align:center"><svg width="11" height="11" viewBox="0 0 11 11" style="vertical-align:2px"><g stroke="#3182f6" stroke-width="2.2"><path d="M5.5 0.2 V10.8"/><path d="M0.9 2.85 L10.1 8.15"/><path d="M0.9 8.15 L10.1 2.85"/></g></svg></span><span class="ast" style="width:12.2px;text-align:center"><svg width="11" height="11" viewBox="0 0 11 11" style="vertical-align:2px"><g stroke="#3182f6" stroke-width="2.2"><path d="M5.5 0.2 V10.8"/><path d="M0.9 2.85 L10.1 8.15"/><path d="M0.9 8.15 L10.1 2.85"/></g></svg></span><span class="ast" style="width:9px;height:10px"><span style="position:absolute;left:0.8px;top:2.6px;width:7.6px;height:2.1px;background:#3182f6"></span></span>8166</div>
<div class="t " style="left:454.4px;top:1117.78px;font-size:15px;color:#15a3a6;letter-spacing:-1.9px;-webkit-text-stroke:0.3px #15a3a6;">오커아를<span style="letter-spacing:0px"> </span>좋아해요</div>
<div class="t " style="left:996.8px;top:1075.48px;font-size:15px;color:#8b95a1;letter-spacing:-1.2px;">총<span style="letter-spacing:0px"> 37</span>번</div>
<div class="t " style="left:997.4px;top:1099.81px;font-size:19px;color:#3a4452;letter-spacing:-1.7px;-webkit-text-stroke:0.35px #3a4452;">한달간<span style="letter-spacing:0.2px"> 5</span>번</div>
<div class="t " style="right:502.20px;text-align:right;top:1088.35px;font-size:21px;color:#333d4b;letter-spacing:-2.2px;-webkit-text-stroke:0.2px #333d4b;"><span style="letter-spacing:-0.2px">1,227,755</span>원</div>
<div class="t " style="right:183.70px;text-align:right;top:1089.11px;font-size:21.5px;color:#333d4b;letter-spacing:0.3px;-webkit-text-stroke:0.2px #333d4b;">9,842P</div>
<div class="a" style="left:373px;top:1148px;width:1506px;height:1px;background:#e2e3e5;"></div>
<div class="a" style="left:388px;top:1174.0px;width:48px;height:48px;border-radius:50%;background:#f2f4f6"></div>
<svg class="a" style="left:400px;top:1184.5px;opacity:0.5" width="24.00" height="25.00" viewBox="0 0 24 25">
 <path d="M3.2 12 C2.6 5 6.5 0.2 12 0.2 C17.5 0.2 21.4 5 20.8 12 Z" fill="#fcd535"/>
 <circle cx="9.6" cy="6" r="1.15" fill="#2a2a2a"/><circle cx="14.2" cy="6" r="1.15" fill="#2a2a2a"/>
 <path d="M11 7.4 L13 7.4 L12 8.7 Z" fill="#e8932a"/>
 <path d="M0.4 11.6 L3.2 10.4 L5.6 12.2 L8.6 10.4 L12 12.4 L15.4 10.4 L18.4 12.2 L20.8 10.4 L23.6 11.6 C23.6 19.6 18.6 25 12 25 C5.4 25 0.4 19.6 0.4 11.6 Z" fill="#92c5fa"/>
</svg>
<div class="t " style="left:454.4px;top:1162.88px;font-size:15px;color:#6b7684;letter-spacing:-1.9px;">미방문<span style="letter-spacing:-0.2px"> | </span>박토스</div>
<div class="t" style="left:455.6px;top:1186.56px;font-size:22px;color:#3182f6;font-weight:400;-webkit-text-stroke:0.6px #3182f6;letter-spacing:0.3px">010<span class="ast" style="width:9px;height:10px"><span style="position:absolute;left:0.8px;top:2.6px;width:7.6px;height:2.1px;background:#3182f6"></span></span><span class="ast" style="width:12.2px;text-align:center"><svg width="11" height="11" viewBox="0 0 11 11" style="vertical-align:2px"><g stroke="#3182f6" stroke-width="2.2"><path d="M5.5 0.2 V10.8"/><path d="M0.9 2.85 L10.1 8.15"/><path d="M0.9 8.15 L10.1 2.85"/></g></svg></span><span class="ast" style="width:12.2px;text-align:center"><svg width="11" height="11" viewBox="0 0 11 11" style="vertical-align:2px"><g stroke="#3182f6" stroke-width="2.2"><path d="M5.5 0.2 V10.8"/><path d="M0.9 2.85 L10.1 8.15"/><path d="M0.9 8.15 L10.1 2.85"/></g></svg></span><span class="ast" style="width:12.2px;text-align:center"><svg width="11" height="11" viewBox="0 0 11 11" style="vertical-align:2px"><g stroke="#3182f6" stroke-width="2.2"><path d="M5.5 0.2 V10.8"/><path d="M0.9 2.85 L10.1 8.15"/><path d="M0.9 8.15 L10.1 2.85"/></g></svg></span><span class="ast" style="width:12.2px;text-align:center"><svg width="11" height="11" viewBox="0 0 11 11" style="vertical-align:2px"><g stroke="#3182f6" stroke-width="2.2"><path d="M5.5 0.2 V10.8"/><path d="M0.9 2.85 L10.1 8.15"/><path d="M0.9 8.15 L10.1 2.85"/></g></svg></span><span class="ast" style="width:9px;height:10px"><span style="position:absolute;left:0.8px;top:2.6px;width:7.6px;height:2.1px;background:#3182f6"></span></span>0009</div>
<div class="t " style="left:454.4px;top:1216.78px;font-size:15px;color:#15a3a6;letter-spacing:-1.9px;-webkit-text-stroke:0.3px #15a3a6;">테스트</div>
<div class="t " style="left:996.8px;top:1174.48px;font-size:15px;color:#8b95a1;letter-spacing:-1.2px;">총<span style="letter-spacing:0px"> 0</span>번</div>
<div class="t " style="left:997.4px;top:1198.81px;font-size:19px;color:#3a4452;letter-spacing:-1.7px;-webkit-text-stroke:0.35px #3a4452;">한달간<span style="letter-spacing:0.2px"> 0</span>번</div>
<div class="a" style="left:1540.2px;top:1196.7px;width:7.099999999999909px;height:1.8999999999998636px;background:#3a4350;border-radius:1px"></div>
<div class="t " style="right:183.70px;text-align:right;top:1188.11px;font-size:21.5px;color:#333d4b;letter-spacing:0.3px;-webkit-text-stroke:0.2px #333d4b;">0P</div>
<div class="a" style="left:373px;top:1248px;width:1506px;height:1px;background:#e2e3e5;"></div>
<div class="a" style="left:388px;top:1269.5px;width:48px;height:48px;border-radius:50%;background:#f2f4f6"></div>
<div class="t " style="left:454.4px;top:1270.08px;font-size:15px;color:#6b7684;letter-spacing:-1.9px;">예비<span style="letter-spacing:-0.2px"> </span>단골<span style="letter-spacing:-0.2px"> | </span>박토스<span style="letter-spacing:-0.2px"> | 20</span>대</div>
<div class="t " style="left:996.8px;top:1270.08px;font-size:15px;color:#8b95a1;letter-spacing:-1.2px;">총<span style="letter-spacing:0px"> 2</span>번</div>
<svg class="a" style="left:1884px;top:369px" width="10" height="6" viewBox="0 0 10 6"><path d="M5 0.3 L9.3 5 H0.7 Z" fill="#a8adb3"/></svg>
<div class="a" style="left:1880px;top:381px;width:17px;height:381px;background:#cdd1d6;"></div>
<svg class="a" style="left:1884px;top:1271px" width="10" height="6" viewBox="0 0 10 6"><path d="M5 5.3 L9.3 0.6 H0.7 Z" fill="#a8adb3"/></svg>
<div class="a" style="left:1965px;top:361px;width:61px;height:864px;border:1.5px solid #b0b3b6;border-radius:10px;background:#fff"></div>
<div class="a" style="left:1966px;top:792.7px;width:59px;height:1.5px;background:#aeb1b4;"></div>
<svg class="a" style="left:1985px;top:570px" width="21" height="14" viewBox="0 0 21 14"><path d="M2 11.5 L10.5 3 L19 11.5" fill="none" stroke="#b0b8c1" stroke-width="2.6" stroke-linecap="round"/></svg>
<svg class="a" style="left:1985px;top:1001px" width="21" height="14" viewBox="0 0 21 14"><path d="M2 2.5 L10.5 11 L19 2.5" fill="none" stroke="#4e5968" stroke-width="2.6" stroke-linecap="round"/></svg>
<div class="a" style="left:1791px;top:433px;width:150px;height:305px;background:#fff;border-radius:0;box-shadow:0 8px 30px rgba(0,20,50,.15)"></div>
<div class="a" style="left:1796px;top:440px;width:140.29999999999995px;height:57.60000000000002px;background:#f2f4f6;border-radius:10px"></div>
<div class="t " style="left:1814.4px;top:459.99px;font-size:17px;color:#3578e8;letter-spacing:-2.3px;-webkit-text-stroke:0.4px #3578e8;">최근<span style="letter-spacing:0.2px"> </span>방문<span style="letter-spacing:0.2px"> </span>순</div>
<div class="t " style="left:1814.4px;top:516.99px;font-size:17px;color:#4e5968;letter-spacing:-1.9px;-webkit-text-stroke:0.2px #4e5968;">방문<span style="letter-spacing:0.1px"> </span>많은<span style="letter-spacing:0.1px"> </span>순</div>
<div class="t " style="left:1814.4px;top:574.89px;font-size:17px;color:#4e5968;letter-spacing:-1.9px;-webkit-text-stroke:0.2px #4e5968;">포인트<span style="letter-spacing:0.1px"> </span>많은<span style="letter-spacing:0.1px"> </span>순</div>
<div class="t " style="left:1814.4px;top:632.79px;font-size:17px;color:#4e5968;letter-spacing:-1.9px;-webkit-text-stroke:0.2px #4e5968;">선불권<span style="letter-spacing:0.1px"> </span>많은<span style="letter-spacing:0.1px"> </span>순</div>
<div class="t " style="left:1814.4px;top:690.69px;font-size:17px;color:#4e5968;letter-spacing:-1.9px;-webkit-text-stroke:0.2px #4e5968;">선불권<span style="letter-spacing:0.1px"> </span>적은<span style="letter-spacing:0.1px"> </span>순</div>
<div class="a" style="left:1790.3px;top:432.2px;width:151.5px;height:310.6px;border:2.5px solid #e3000b;background:rgba(255,0,0,.12)"></div>
<div class="a" style="background:#000;left:0;top:0;width:2048px;height:2px"></div>
<div class="a" style="background:#000;left:0;top:1281px;width:2048px;height:2px"></div>
<div class="a" style="background:#000;left:0;top:0;width:2px;height:1283px"></div>
<div class="a" style="background:#000;left:2046px;top:0;width:2px;height:1283px"></div>
<div class="a" style="background:rgba(0,0,0,.45);left:0;top:2px;width:2048px;height:1px"></div>
<div class="a" style="background:rgba(0,0,0,.45);left:0;top:1280px;width:2048px;height:1px"></div>
<div class="a" style="background:rgba(0,0,0,.45);left:2px;top:0;width:1px;height:1283px"></div>
<div class="a" style="background:rgba(0,0,0,.45);left:2045px;top:0;width:1px;height:1283px"></div>
</body>
</html>
